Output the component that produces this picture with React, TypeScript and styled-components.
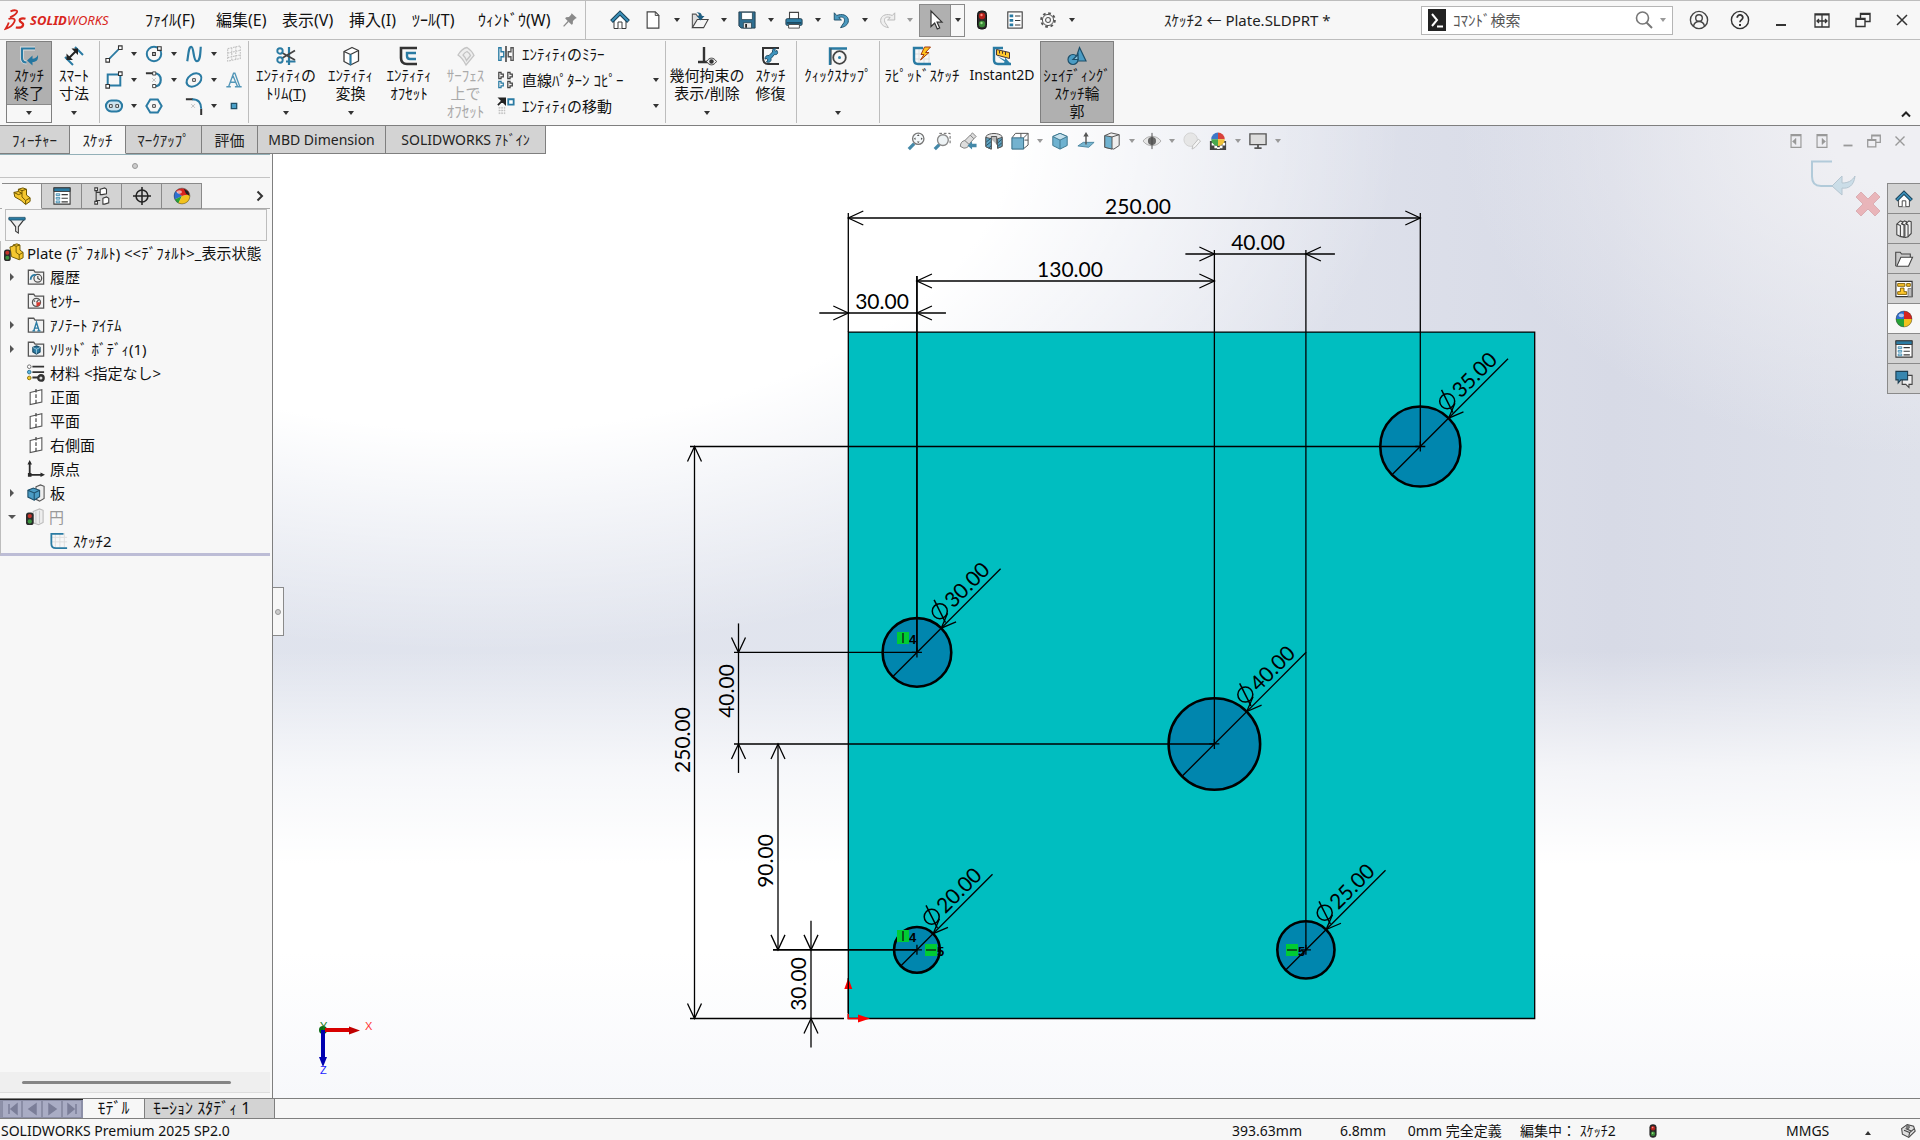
import React from "react";
import styled, { createGlobalStyle } from "styled-components";

const BLUE = "#2a7ba3";
const DARK = "#3a3a3a";

const GlobalStyle = createGlobalStyle`
  html, body, #root { height: 100%; margin: 0; }
  * { box-sizing: border-box; }
  body {
    font-family: "Noto Sans", "Noto Sans CJK JP", sans-serif;
    font-size: 15px;
    line-height: 18px;
    color: #111;
    background: #f7f7f7;
    overflow: hidden;
  }
  button, input {
    font: inherit; color: inherit; border: 0; padding: 0; margin: 0; background: none;
  }
  button { white-space: nowrap; }
  ul { list-style: none; margin: 0; padding: 0; }
`;

/* ---------- icon drawings, all on a 20 x 20 grid ---------- */

const ART: Record<string, React.ReactNode> = {
  pin: (
    <g>
      <path d="M12 1.500l6.500 6-2 .8-2.800 3-.2 3.700-1.500 1L4 8l1-1.500 3.700-.3 2.600-2.700z" fill="#8a8a8a" />
      <path d="M8 11.500L2 18" stroke="#8a8a8a" strokeWidth="1.600" />
    </g>
  ),
  home: (
    <g>
      <path d="M4 10v8.500h12V10l-6-6z" fill="#fff" stroke={DARK} />
      <path d="M8 18.500v-6.500h4v6.500" fill="#fff" stroke={DARK} />
      <path d="M1.500 11.500L10 3l8.500 8.500" fill="none" stroke="#183f55" strokeWidth="4" />
      <path d="M2 11L10 3l8 8" fill="none" stroke="#3b8fb8" strokeWidth="2" />
    </g>
  ),
  file: (
    <g>
      <path d="M3.500 1h9l4 4v14h-13z" fill="#fff" stroke="#444" strokeWidth="1.300" />
      <path d="M12.500 1v4h4z" fill="#ddd" stroke="#444" />
    </g>
  ),
  open: (
    <g>
      <path d="M1.500 18V3.500h4l1.500 2h5V8" fill="#ddd" stroke="#555" strokeWidth="1.200" />
      <path d="M1.500 18.500L7 9.500h12l-5 9z" fill="#f5f5f5" stroke="#444" strokeWidth="1.200" />
      <path d="M6 1.500c4 0 6 1 6 4h3l-4.500 5L6.500 5.500H9c0-2-1-3-3-4z" fill="#1f5f83" />
    </g>
  ),
  save: (
    <g>
      <path d="M1 1h18v18H3.500L1 16.500z" fill="#2f6f91" stroke="#1f3a49" />
      <path d="M4 1.500h12v8H4z" fill="#fff" stroke="#1f3a49" strokeWidth=".8" />
      <path d="M6 13h9v6H6z" fill="#e8e8e8" stroke="#1f3a49" strokeWidth=".8" />
      <path d="M8 14.500h2v4H8z" fill="#222" />
    </g>
  ),
  print: (
    <g>
      <path d="M5 9V1.500h10V9" fill="#fff" stroke="#444" strokeWidth="1.200" />
      <rect x="1" y="8.500" width="18" height="7.500" rx="1.500" fill="#2f7fa6" stroke="#1f3a49" />
      <path d="M2 12.500h16v1.500H2z" fill="#17394b" />
      <path d="M4 15h12v4H4z" fill="#fff" stroke="#444" />
    </g>
  ),
  undo: <path d="M2.500 2v8h8L7.500 7.300c4.500-1.500 7.500.2 6 5.200L9.500 18.500c6.500-1 9.500-5 8.500-9.500C16.800 4.300 11 2.700 5.200 5z" fill="#4b9ac0" stroke="#20526c" strokeWidth="1.100" />,
  redo: <path d="M17.500 2v8h-8l3-2.700c-4.500-1.500-7.500.2-6 5.200l4 6C4 17.500 1 13.500 2 9 3.200 4.300 9 2.700 14.800 5z" fill="#eee" stroke="#bbb" strokeWidth="1.100" />,
  cursor: <path d="M6 1v15.500l3.700-3.500 2.600 6 2.400-1-2.600-5.800H17z" fill="#fff" stroke="#333" strokeWidth="1.200" />,
  traffic: (
    <g>
      <rect x="5.500" y="1" width="9" height="18" rx="3.500" fill="#2b2b2b" stroke="#111" />
      <circle cx="10" cy="6" r="3.200" fill="#b3211b" />
      <circle cx="10" cy="14" r="3.200" fill="#3a8a37" />
      <circle cx="9.500" cy="5" r="1.200" fill="#ff8b80" />
      <circle cx="9.500" cy="13" r="1.200" fill="#9be08a" />
    </g>
  ),
  options: (
    <g>
      <rect x="2" y="1" width="16" height="18" fill="#fff" stroke={DARK} strokeWidth="1.200" />
      <path d="M4 4h4v3H4zM4 9h4v3H4zM4 14h4v3H4z" fill={BLUE} />
      <path d="M10 5.500h6M10 10.500h6M10 15.500h6" stroke={DARK} strokeWidth="1.200" />
    </g>
  ),
  gear: (
    <g fill="none" stroke="#555">
      <circle cx="10" cy="10" r="7.600" strokeWidth="2.200" strokeDasharray="3 2.970" />
      <circle cx="10" cy="10" r="6.200" fill="#f7f7f7" strokeWidth="1.100" />
      <circle cx="10" cy="10" r="2.700" strokeWidth="1.200" />
    </g>
  ),
  user: (
    <g fill="none" stroke="#444" strokeWidth="1.400">
      <circle cx="10" cy="10" r="8.600" />
      <circle cx="10" cy="8" r="3.300" />
      <path d="M4.500 16c1-4 3-4.500 5.500-4.500s4.500.5 5.500 4.500" />
    </g>
  ),
  help: (
    <g fill="none" stroke="#333" strokeWidth="1.400">
      <circle cx="10" cy="10" r="8.600" />
      <path d="M7.200 7.800c0-4 5.800-3.600 5.600 0-.1 2-2.800 2.200-2.800 4.400" strokeWidth="1.800" />
      <path d="M10 14v2" strokeWidth="2" />
    </g>
  ),
  minimize: <path d="M5 15h10" stroke="currentColor" strokeWidth="2" />,
  span: (
    <g fill="none" stroke="currentColor" strokeWidth="1.300">
      <path d="M3 4h14v13H3zM3 4.800h14M10 4v13M5 11h10M7 9l-2 2 2 2M13 9l2 2-2 2" />
    </g>
  ),
  restore: (
    <path d="M3 8.500h9v8H3zM3 9.200h9M7.500 8V3.500H17v8h-5M7.500 4.200H17" fill="none" stroke="currentColor" strokeWidth="1.400" />
  ),
  close: <path d="M5 5l10 10M15 5L5 15" stroke="currentColor" strokeWidth="1.500" />,
  paneLeft: (
    <g fill="none" stroke="currentColor" strokeWidth="1.300">
      <path d="M4.500 3h11v14h-11zM4.500 4h11" />
      <path d="M10 7l-4 3.500 4 3.500z" fill="currentColor" strokeWidth=".5" />
    </g>
  ),
  paneRight: (
    <g fill="none" stroke="currentColor" strokeWidth="1.300">
      <path d="M4.500 3h11v14h-11zM4.500 4h11" />
      <path d="M10 7l4 3.500-4 3.500z" fill="currentColor" strokeWidth=".5" />
    </g>
  ),
  exitSketch: (
    <g>
      <path d="M16 2.500H3v9.500c0 3 2 4.500 4.500 4.500" fill="none" stroke="#fff" strokeWidth="4" opacity=".6" />
      <path d="M16 2.500H3v9.500c0 3 2 4.500 4.500 4.500" fill="none" stroke={BLUE} strokeWidth="2.200" />
      <path d="M19 9c.5 5-1.500 7-5.500 7v3.500L8 14.500l5.500-5v3.200c2.500 0 4-1 5.500-3.700z" fill="#2476a0" />
    </g>
  ),
  smartDim: (
    <g fill="none">
      <path d="M1 11l8 8M11 1l8 8" stroke={BLUE} strokeWidth="2" />
      <path d="M4 13L13 4" stroke="#222" strokeWidth="2" />
      <path d="M2.500 14V7.500L9 14zM14 2.500H7.500L14 9z" fill="#222" />
    </g>
  ),
  line: (
    <g>
      <path d="M3 17L17 3" stroke={BLUE} strokeWidth="2" />
      <path d="M1 15h4v4H1zM15 1h4v4h-4z" fill="#fff" stroke="#333" strokeWidth="1.200" />
    </g>
  ),
  circle: (
    <g fill="none" stroke={BLUE}>
      <circle cx="10" cy="10" r="8" strokeWidth="2.200" />
      <path d="M8.500 8.500h3v3h-3zM14 2h4v4h-4z" fill="#fff" stroke="#333" strokeWidth="1.200" />
    </g>
  ),
  spline: <path d="M2.500 18C4 9 4 2 7 2s2 16 6 16 4-8 4.500-16" fill="none" stroke={BLUE} strokeWidth="2.400" />,
  gridPlane: <path d="M3 4l14-3v14L3 18zM3 9l14-3M3 14l14-3M7.500 3v14M12 2v14" fill="none" stroke="#c0c0c0" strokeWidth="1.200" strokeDasharray="2 1" />,
  rect: (
    <g fill="none">
      <path d="M3 4h14v12H3z" stroke={BLUE} strokeWidth="2.200" />
      <path d="M1 15h4v4H1zM15 1h4v4h-4z" fill="#fff" stroke="#333" strokeWidth="1.200" />
    </g>
  ),
  arc: (
    <g fill="none">
      <path d="M1 2.500h8" stroke="#333" strokeWidth="2.200" />
      <path d="M10 2.500c5 0 7.500 3 7.500 7.500s-2.500 7-7.500 7" stroke={BLUE} strokeWidth="2.400" />
      <path d="M8.500 1h3.500v3.500H8.500zM8.500 15h3.500v3.500H8.500z" fill="#fff" stroke="#333" />
      <path d="M8 8l4 4M12 8l-4 4" stroke="#bbb" />
    </g>
  ),
  ellipse: (
    <g fill="none">
      <ellipse cx="10" cy="10" rx="9" ry="6.500" transform="rotate(-35 10 10)" stroke={BLUE} strokeWidth="2.200" />
      <path d="M8.500 8.500h3v3h-3z" fill="#fff" stroke="#333" />
    </g>
  ),
  letterA: (
    <path d="M1.500 17.500h5M11 17.500h7.500M4 17.500L9.500 2.500h1.500l5.500 15M14 17.500L9 5.500M6 12.500h6.500" fill="none" stroke="#5497b8" strokeWidth="1.500" />
  ),
  slot: (
    <g fill="none">
      <rect x="1" y="4" width="18" height="12" rx="6" fill="#cde3ee" stroke={BLUE} strokeWidth="2.200" />
      <path d="M5 8.500h3v3H5zM12 8.500h3v3h-3z" fill="#fff" stroke="#333" />
    </g>
  ),
  polygon: (
    <g fill="none">
      <path d="M5.800 2.800h8.400L18.500 10l-4.300 7.200H5.800L1.500 10z" stroke={BLUE} strokeWidth="2.200" />
      <path d="M8.500 8.500h3v3h-3z" fill="#fff" stroke="#333" />
    </g>
  ),
  fillet: (
    <g fill="none" strokeWidth="2.200">
      <path d="M1 2.500h8M18 13v7" stroke="#333" />
      <path d="M8 2.500c7 0 10 4 10 10.500" stroke={BLUE} />
      <path d="M7 8l4 4M11 8l-4 4" stroke="#bbb" strokeWidth="1" />
    </g>
  ),
  point: <path d="M7 7h6v6H7z" fill="#4aa0c8" stroke="#1f4f68" strokeWidth="1.400" />,
  trim: (
    <g fill="none">
      <path d="M13 1v18M10 15.500h9.500" stroke={BLUE} strokeWidth="2.200" />
      <path d="M5.500 6.500L19 14M5.500 12.500L19 4.500" stroke="#444" strokeWidth="1.800" />
      <circle cx="4" cy="5" r="2.700" stroke={BLUE} strokeWidth="1.900" />
      <circle cx="4" cy="14" r="2.700" stroke={BLUE} strokeWidth="1.900" />
    </g>
  ),
  convert: (
    <g stroke={DARK} strokeWidth="1.300" strokeLinejoin="round">
      <path d="M3 5.500l8-4 6.500 3v10.500l-8 4L3 15.500z" fill="#fff" />
      <path d="M3 5.500l6.500 3 8-4M9.500 8.500V19" fill="none" />
      <path d="M9.500 8.500V19" stroke={BLUE} strokeWidth="2" />
    </g>
  ),
  offset: (
    <g fill="none">
      <path d="M18 2H2v10c0 4 2 6 6 6h10" stroke="#333" strokeWidth="2.600" />
      <path d="M17 7H8v3c0 2 1 3 3 3h6" stroke={BLUE} strokeWidth="2.400" />
    </g>
  ),
  surfaceOffset: (
    <g fill="#eee" stroke="#c4c4c4" strokeWidth="1.300">
      <path d="M2 9C5 4 8 2 11 1.500c3 2 5.500 4.500 7 8L10 19C8 15 5 11 2 9z" />
      <path d="M7 9c1.500-2.500 2.500-3 4-3.500 1.500 1 3 2.500 3.500 4l-4 5C10 12.500 8.500 10.500 7 9z" />
    </g>
  ),
  mirror: (
    <g fill="none" strokeWidth="1.500">
      <path d="M10 1v18" stroke="#222" />
      <path d="M2 3v14h2.500v-4H7.500V7.500h-3V3z" stroke={BLUE} />
      <path d="M18 3v14h-2.500v-4H12.500V7.500h3V3z" stroke="#555" />
    </g>
  ),
  pattern: (
    <g fill="none" strokeWidth="1.400">
      <path d="M2 1.500v7h2.500v-2H7V3.500H4.500v-2zM12 1.500v7h2.500v-2H17V3.500h-2.500v-2zM12 11.500v7h2.500v-2H17v-3h-2.500v-2z" stroke="#444" />
      <path d="M2 11.500v7h2.500v-2H7v-3H4.500v-2z" stroke={BLUE} />
    </g>
  ),
  move: (
    <g>
      <path d="M2 12h7M2 15h7M2 18h7M2.500 11v8M5.500 11v8M8.500 11v8" stroke="#c0c0c0" strokeDasharray="2 1" />
      <path d="M1 9l5-5M3 1.500h6v6z" stroke="#222" strokeWidth="2" fill="#222" />
      <path d="M12.500 2.500h6v6h-6z" fill="#fff" stroke={BLUE} strokeWidth="2" />
    </g>
  ),
  relations: (
    <g fill="none">
      <path d="M7 1v14.500M1 16h11" stroke="#333" strokeWidth="2.400" />
      <path d="M9.500 15.500c3-4.500 7-4.500 10 0-3 4.500-7 4.500-10 0z" fill="#eee" stroke="#444" />
      <circle cx="14.500" cy="15.500" r="2.200" fill="#333" />
    </g>
  ),
  repair: (
    <g fill="none">
      <path d="M18 2H2v10c0 4 2 6 5 6h11" stroke="#333" strokeWidth="2" />
      <path d="M16 4.500c1.500 3 0 4.500-2.500 4L10 12.500c.5 3-1.500 4.500-4.500 3.500l1.500-2-1-1.500-2 .5c0-2.500 1.500-4 4-3.500L11.500 6c-.5-2.500 1-4 3.500-3.500L13.500 4l1 1.200z" fill="#3d93bd" stroke="#1d4e69" />
    </g>
  ),
  quickSnap: (
    <g fill="none">
      <path d="M2 19V2.500h17" stroke={BLUE} strokeWidth="2.400" />
      <path d="M3 18.500V2.500" stroke="#444" strokeWidth="1" />
      <circle cx="11.500" cy="11.500" r="6.300" stroke="#444" strokeWidth="1.800" />
      <circle cx="11.500" cy="11.500" r="1.500" fill={BLUE} />
    </g>
  ),
  rapid: (
    <g fill="none">
      <path d="M7 2v16M12 8v10M2 8h15M2 13h16M17 6v12" stroke="#ddd" />
      <path d="M11 2H2v12c0 3 1.500 4 4 4h13" stroke={BLUE} strokeWidth="2.400" />
      <path d="M12.500 1L9 8.500h3L8.500 14 17 6.500h-3.500L18.500 1z" fill="#ffc21c" stroke="#a33a12" />
    </g>
  ),
  instant: (
    <g fill="none">
      <path d="M11 2H2v12c0 3 1.500 4 4 4h13" stroke={BLUE} strokeWidth="2.400" />
      <path d="M4.500 3.500l13 3v6l-13-3.500z" fill="#ffc82c" stroke="#433" />
      <path d="M7.500 4.500v3M10.500 5.200v2.500M13.500 6v3" stroke="#433" />
      <path d="M5 10l8 4v-2.500L18 17l-6 .5.500-2z" fill="#2f82ab" />
    </g>
  ),
  shaded: (
    <g stroke="#1d4e69" strokeWidth="1.200">
      <path d="M12.500 1.500L19 15H8z" fill="#4b9cc4" />
      <circle cx="6" cy="13.500" r="5" fill="#4b9cc4" />
      <path d="M6 13.500l5-5v5z" fill="#8cc4de" />
    </g>
  ),
  zoomFit: (
    <g fill="none">
      <path d="M2 19l6-6" stroke="#4488a8" strokeWidth="3.600" />
      <circle cx="12.500" cy="7.500" r="6.300" fill="#f4f8fa" stroke="#777" strokeWidth="1.500" />
      <path d="M12.500 2.500l1.500 2h-3zM12.500 12.500l1.500-2h-3zM7.500 7.500l2-1.500v3zM17.500 7.500l-2-1.500v3z" fill="#555" />
    </g>
  ),
  zoomArea: (
    <g fill="none">
      <path d="M7 1.500h12v12" stroke="#555" strokeDasharray="3 2" />
      <path d="M2 19l5-5" stroke="#4488a8" strokeWidth="3.600" />
      <circle cx="11" cy="9" r="6" fill="#eef3f5" stroke="#888" strokeWidth="1.500" />
    </g>
  ),
  prevView: (
    <g>
      <path d="M1.500 16c0-4 2-6 5-6.500L13 3l2-2 4 4-2 2-5 5.500c0 3-3 5.500-6.500 5.500z" fill="#ddd" stroke="#777" />
      <path d="M6.500 9.500l5 4.500M12.500 3.500l4 4" stroke="#777" />
      <path d="M19.500 13h-5v-2.500l-5 4.500 5 4.500V17h5z" fill="#4488a8" />
    </g>
  ),
  section: (
    <g stroke="#555" strokeWidth="1.100">
      <path d="M1 5c3-4.500 15-4.500 18 0v11l-5 2V8H7v11l-6-3z" fill="#e5e5e5" />
      <path d="M7 8V5h6v9" fill="#bbb" />
      <path d="M1 6l6 1.500V19l-6-2.500zM14 7.500L19 6v10l-5 2z" fill="#5ea3c2" />
      <path d="M1.500 11l5-4M1.500 15l5-4M4 18l3-3M14.500 12l4-4M14.500 16l4-4" stroke="#244f63" />
    </g>
  ),
  viewOrient: (
    <g stroke="#555" strokeWidth="1.100">
      <path d="M5 1.500h14v13l-5 4M5 1.500l-4 5M19 1.500l-5 5M11 1.500v5M15 9h4" fill="none" />
      <path d="M1 6.500h13V19H1z" fill="#74b2cf" stroke="#356a84" />
    </g>
  ),
  cube: (
    <g stroke="#3f7890" strokeWidth="1.100" strokeLinejoin="round">
      <path d="M10 1.500l8 3.500v10l-8 4-8-4V5z" fill="#6fb2d0" />
      <path d="M2 5l8 4 8-4-8-3.500z" fill="#c6e1ed" />
      <path d="M10 9v10" />
    </g>
  ),
  normalTo: (
    <g>
      <path d="M1 15.500l6-4h12l-6 5.500z" fill="#77b5d0" stroke="#47839e" />
      <path d="M10 14V4" stroke="#555" strokeWidth="1.600" />
      <path d="M10 0l3 5H7z" fill="#555" />
    </g>
  ),
  display: (
    <g stroke="#555" strokeWidth="1.100">
      <path d="M2 4l7-3 9 2v12l-6 4-10-2z" fill="#eee" />
      <path d="M2 4l8 1.500V19L2 17z" fill="#6fb2d0" />
      <path d="M10 5.500l8-2.500" fill="none" />
    </g>
  ),
  eye: (
    <g>
      <path d="M0 10c5-7 15-7 20 0-5 7-15 7-20 0z" fill="#e6e6e6" stroke="#aaa" />
      <circle cx="10" cy="10" r="4.500" fill="#666" />
      <path d="M10 1v18" stroke="#444" />
    </g>
  ),
  editApp: (
    <g>
      <circle cx="8.500" cy="8.500" r="7.500" fill="#e6e6e6" stroke="#d0d0d0" />
      <path d="M10 19l1-4 6-7 2.500 2-6 7z" fill="#f6f6f6" stroke="#bbb" />
    </g>
  ),
  scene: (
    <g>
      <path d="M1 10h18v10H1z" fill="#444" />
      <path d="M3 12h3v3H3zM6 15h3v3H6zM12 15h3v3h-3zM15 12h3v3h-3zM9 17h3v2H9z" fill="#fff" />
      <path d="M10 8V.5A7.500 7.500 0 0 0 2.500 8z" fill="#3f78c8" />
      <path d="M10 8V.5A7.500 7.500 0 0 1 17.500 8z" fill="#d8423b" />
      <path d="M10 8v7.500A7.500 7.500 0 0 1 2.500 8z" fill="#48a84d" />
      <path d="M10 8v7.500A7.500 7.500 0 0 0 17.500 8z" fill="#f1c33b" />
    </g>
  ),
  monitor: (
    <g>
      <path d="M1 2h18v12H1z" fill="#ddd" stroke="#555" strokeWidth="1.500" />
      <path d="M10 14v3M6 18h8" stroke="#555" strokeWidth="2" />
    </g>
  ),
  part: (
    <g stroke="#6d5600" strokeWidth="1.100" strokeLinejoin="round">
      <path d="M1 6l5-1V2.500L11 1l4 1.500V9l4 3v4l-5 3.500-5-4.500-7-4z" fill="#f5c72f" />
      <path d="M6 5l4 2v4l4 4 5-3M10 3.500V7M6 2.500l4 1.500 5-1.500M1 6l5 2.500L10 7M14 15v4" fill="none" />
    </g>
  ),
  properties: (
    <g>
      <path d="M1 1h18v18H1z" fill="#fff" stroke={DARK} strokeWidth="1.200" />
      <path d="M1 1h18v4H1z" fill={BLUE} stroke={DARK} />
      <path d="M3.500 7.500h4v2h-4zM3.500 11.500h4v2h-4zM3.500 15.500h4v2h-4z" fill="#bfe0ee" stroke={BLUE} strokeWidth=".8" />
      <path d="M9.500 8.500h7M9.500 12.500h7M9.500 16.500h7" stroke={DARK} strokeWidth="1.200" />
    </g>
  ),
  config: (
    <g fill="#fff" stroke={DARK} strokeWidth="1.200">
      <path d="M3.500 1v18M3.500 6H8M3.500 15H8" fill="none" />
      <path d="M8 2.500l5-1.500 2 1.500v5l-5 1H8zM11 12.500l4-1.500 2.500 1.500v5l-4.500 1.500H11z" />
      <path d="M2 1h3v3H2zM2 16h3v3H2z" />
    </g>
  ),
  target: (
    <g fill="none" stroke="#222" strokeWidth="1.700">
      <circle cx="10" cy="10" r="6.600" />
      <path d="M10 0v20M0 10h20" />
    </g>
  ),
  ball: (
    <g>
      <path d="M10 10V1a9 9 0 0 0-9 9z" fill="#2f6fd0" />
      <path d="M10 10V1a9 9 0 0 1 9 9z" fill="#d8241e" />
      <path d="M10 10v9a9 9 0 0 1-9-9z" fill="#27a336" />
      <path d="M10 10v9a9 9 0 0 0 9-9z" fill="#f2c21d" />
      <circle cx="10" cy="10" r="8.800" fill="none" stroke="#333" strokeOpacity=".5" />
      <ellipse cx="7" cy="6" rx="3" ry="2" fill="#fff" opacity=".6" />
    </g>
  ),
  appearance: (
    <g>
      <path d="M10 10L3 4.500A9 9 0 0 0 2 14z" fill="#2f6fd0" />
      <path d="M10 10L3 4.500A9 9 0 0 1 18.500 8z" fill="#d8241e" />
      <path d="M10 10l-8 4a9 9 0 0 0 4 4z" fill="#27a336" />
      <path d="M10 10l-4 8a9 9 0 0 0 13-8l-.5-2z" fill="#f2c21d" />
      <path d="M12 2l5 3 1.500 5-4-2.500z" fill="#222" />
      <circle cx="10" cy="10" r="8.800" fill="none" stroke="#333" strokeOpacity=".5" />
      <ellipse cx="7" cy="5.500" rx="3" ry="2" fill="#fff" opacity=".6" />
    </g>
  ),
  funnel: (
    <g>
      <path d="M1.500 3h17l-7 9v7l-3-2v-5z" fill="#eee" stroke={DARK} strokeWidth="1.200" />
      <path d="M1 1.500h18v3H1z" fill={BLUE} stroke="#1f4f68" strokeWidth=".8" />
    </g>
  ),
  partState: (
    <g>
      <g transform="translate(4 -1) scale(.86)" stroke="#6d5600" strokeWidth="1.200" strokeLinejoin="round">
        <path d="M3 5l4-1V2.500L12 1l4 1.500V9l4 3v7l-5 2.500-10-4z" fill="#f5c72f" />
        <path d="M7 2.500l4 1.500 5-1.500M11 4v8l4 3 5-3M15 15v6" fill="none" />
      </g>
      <rect x="0" y="6" width="7.500" height="13" rx="3" fill="#2b2b2b" />
      <circle cx="3.700" cy="9.700" r="2.200" fill="#c5332b" />
      <circle cx="3.700" cy="15.300" r="2.200" fill="#3c9440" />
    </g>
  ),
  folderHistory: (
    <g fill="none" stroke="#555" strokeWidth="1.400">
      <path d="M1.500 18V2.500h6l1.500 2h9.500V18z" fill="#f2f2f2" />
      <circle cx="12" cy="11.500" r="4.300" />
      <path d="M12 9v2.500l2.500 1.500" />
      <path d="M4 13c0-4 3-6 6-5" stroke={BLUE} strokeWidth="2" />
    </g>
  ),
  folderSensor: (
    <g fill="none" stroke="#555" strokeWidth="1.400">
      <path d="M1.500 18V2.500h6l1.500 2h9.500V18z" fill="#f2f2f2" />
      <circle cx="10.500" cy="11.500" r="4.500" />
      <path d="M10.500 11.500l2.500-3M7.500 9.500l1.500 1" />
      <path d="M10.500 11.500h4.500a4.500 4.500 0 0 1-4.500 4.500z" fill="#d8392f" stroke="none" />
    </g>
  ),
  folderA: (
    <g fill="none" stroke="#555" strokeWidth="1.400">
      <path d="M1.500 18V2.500h6l1.500 2h9.500V18z" fill="#f2f2f2" />
      <path d="M6 16.500h3M11.500 16.500h3.500M7.500 16.500l3-9.500 3 9.500M8.500 13.500h4" stroke={BLUE} strokeWidth="1.600" />
    </g>
  ),
  folderBody: (
    <g fill="none" stroke="#555" strokeWidth="1.400">
      <path d="M1.500 18V2.500h6l1.500 2h9.500V18z" fill="#f2f2f2" />
      <path d="M10.500 6.500l4 1.800v5l-4 2.200-4-2.200v-5z" fill={BLUE} stroke="#1d4e69" />
      <path d="M6.500 8.300l4 2 4-2M10.500 10.300v5" stroke="#bfe0ee" strokeWidth=".8" />
    </g>
  ),
  material: (
    <g>
      <path d="M6 3h13M6 9h13M6 15h8" stroke="#333" strokeWidth="2" />
      <circle cx="2.500" cy="3" r="2" fill="#fff" stroke="#666" />
      <circle cx="2.500" cy="9" r="2" fill="#5db6df" stroke="#2a6f90" />
      <circle cx="2.500" cy="15.500" r="2" fill="#f1c92f" stroke="#8b6f00" />
      <circle cx="15.500" cy="15.500" r="3" fill="#ddd" stroke="#333" strokeWidth="2.600" />
    </g>
  ),
  plane: (
    <g fill="#fff" stroke="#555" strokeWidth="1.200">
      <path d="M3.500 5l13-3v13.500l-13 3z" />
      <path d="M10 1v18" stroke="#333" strokeDasharray="4 2" />
    </g>
  ),
  origin: (
    <g>
      <path d="M3 3v13.500h14" fill="none" stroke="#2a2a2a" strokeWidth="2" />
      <path d="M3 0l2.500 5H.5zM20 16.500L15 14v5zM1 14.500h4v4H1z" fill="#2a2a2a" />
    </g>
  ),
  extrude: (
    <g strokeWidth="1.200">
      <path d="M10 3l5-2 4 1.500V16l-5 3-4-2z" fill="#eee" stroke="#555" />
      <path d="M1 7l6-2.500L14 7v7l-6 4-7-3.500z" fill="#4b9cc4" stroke="#1d4e69" />
      <path d="M1 7l7 3 6-3M8 10v8" fill="none" stroke="#1d4e69" />
    </g>
  ),
  extrudeBusy: (
    <g strokeWidth="1.200">
      <path d="M8 4l7-3 4 1.500V16l-5 2.500-6-2z" fill="#eee" stroke="#bbb" />
      <path d="M11 4v13M15 3v14" stroke="#ccc" />
      <rect x="0" y="5" width="8.500" height="14" rx="3" fill="#2b2b2b" />
      <circle cx="4.200" cy="9" r="2.400" fill="#c5332b" />
      <circle cx="4.200" cy="15" r="2.400" fill="#3c9440" />
    </g>
  ),
  sketch: (
    <g fill="none">
      <path d="M6 1v16M11 1v16M16 1v16M2 6h17M2 11h17" stroke="#dcdcdc" />
      <path d="M15 2H1.500v11c0 3 2 5 5 5H19" stroke={BLUE} strokeWidth="2" />
    </g>
  ),
  library: (
    <g fill="#f2f2f2" stroke="#444" strokeWidth="1.200" strokeLinejoin="round">
      <path d="M12 4l3.500-3L18 2v13l-3.500 3.500-3-1z" />
      <path d="M7 4l3.500-3L13 2l-1 2.500 2.500 1v13l-3 1-3.500-1.500z" />
      <path d="M2 4.500L6 1l2.500 1-1 2.500 2.500 1V19l-3.500-.5L2 16.500z" />
      <path d="M2 4.500l4 1.500v12M7 4l4 1.500v13M12 4l2.500 1" fill="none" />
    </g>
  ),
  folderOpen: (
    <g stroke="#444" strokeWidth="1.200">
      <path d="M.8 18V2.500h5l1.500 2H17V8" fill="#c9c9c9" />
      <path d="M2 18L6.500 8h13L15 18z" fill="#fff" />
    </g>
  ),
  palette: (
    <g>
      <path d="M1 1.500h18v17H1z" fill="#fff" stroke="#333" strokeWidth="1.300" />
      <path d="M3 4h8v3H3zM13 4h4v3h-4zM3 13h3V9h4v4h3v3H3z" fill="#ffc82c" stroke="#7a5a00" />
      <path d="M14.500 9.500h4v9h-4z" fill="#bbb" stroke="#777" />
    </g>
  ),
  forum: (
    <g strokeWidth="1.200">
      <path d="M8 6h11v10h-3.500v3.500L12 16H8z" fill="#eee" stroke="#444" />
      <path d="M1 1.500h13V11H6.500l-3 3.500V11H1z" fill="#3786af" stroke="#1d3f52" />
    </g>
  ),
  tag: (
    <g fill="#ddd" stroke="#444" strokeWidth="1.300">
      <path d="M2 7l7-5 8 2 2 6-8 8-8-4z" />
      <path d="M5 9l7 3M7 7l7 3M11 17l1-5 6-5" />
      <circle cx="10" cy="5" r="1.500" />
    </g>
  ),
};

const Svg = styled.svg<{ $s?: number }>`
  display: block;
  flex: none;
  width: ${(p) => p.$s ?? 20}px;
  height: ${(p) => p.$s ?? 20}px;
  overflow: visible;
`;
const Icon = ({ name, size }: { name: string; size?: number }) => (
  <Svg viewBox="0 0 20 20" $s={size} aria-hidden="true">
    {ART[name]}
  </Svg>
);

const Caret = styled.span<{ $faint?: boolean }>`
  width: 0;
  height: 0;
  border: 3px solid transparent;
  border-top: 4px solid ${(p) => (p.$faint ? "#999" : "#333")};
  border-bottom: 0;
`;

/* ---------- title bar ---------- */

const Page = styled.div`
  height: 100vh;
  display: flex;
  flex-direction: column;
  border-top: 1px solid #bdbdbd;
`;
const TitleBar = styled.header`
  height: 39px;
  flex: none;
  display: flex;
  align-items: center;
  border-bottom: 1px solid #bdbdbd;
  background: #f7f7f7;
`;
const Brand = styled.div`
  width: 138px;
  padding-left: 4px;
  display: flex;
  align-items: center;
  gap: 3px;
  color: #d9261c;
  font-size: 13px;
  font-style: italic;
  b { font-weight: 700; }
`;
const Menu = styled.nav`
  display: flex;
  width: 424px;
  font-size: 16px;
`;
const MenuItem = styled.button<{ $w: number }>`
  width: ${(p) => p.$w}px;
  padding-left: 7px;
  text-align: left;
`;
const PinCell = styled.button`
  width: 24px;
  height: 38px;
  border-right: 1px solid #bdbdbd;
  display: flex;
  align-items: center;
`;
const QuickBar = styled.div`
  display: flex;
  align-items: center;
  padding-left: 22px;
`;
const IconButton = styled.button<{ $mr?: number }>`
  width: 24px;
  height: 30px;
  display: flex;
  align-items: center;
  justify-content: center;
  margin-right: ${(p) => p.$mr ?? 0}px;
`;
const CaretButton = styled.button<{ $w?: number }>`
  width: ${(p) => p.$w ?? 23}px;
  height: 30px;
  display: flex;
  align-items: center;
  justify-content: center;
`;
const SelectTool = styled.div`
  display: flex;
  width: 46px;
  height: 33px;
  margin-right: 5px;
  border: 1px solid #8a8a8a;
  button:first-child { width: 32px; height: 31px; background: #b0b0b0; border-right: 1px solid #8a8a8a; margin: 0; }
`;
const DocTitle = styled.div`
  flex: 1;
  padding-left: 81px;
  color: #222;
`;
const SearchBox = styled.label`
  width: 252px;
  height: 29px;
  margin-right: 5px;
  padding: 0 6px;
  display: flex;
  align-items: center;
  gap: 7px;
  border: 1px solid #b5b5b5;
  background: #fff;
  input { flex: 1; min-width: 0; outline: 0; }
  input::placeholder { color: #555; opacity: 1; }
`;
const WindowButton = styled.button<{ $w: number }>`
  width: ${(p) => p.$w}px;
  height: 30px;
  display: flex;
  align-items: center;
  justify-content: center;
  color: inherit;
`;
const WindowButtons = styled.div<{ $faint?: boolean }>`
  display: flex;
  align-items: center;
  color: ${(p) => (p.$faint ? "#999" : "#333")};
`;

const QUICK: [string, string, number?][] = [
  ["file", "新規"],
  ["open", "開く"],
  ["save", "保存"],
  ["print", "印刷"],
  ["undo", "元に戻す"],
  ["redo", "やり直し", 19],
];

const Title = () => (
  <TitleBar>
    <Brand>
      <svg width="23" height="22" viewBox="0 0 23 22" fill="none" stroke="#d9261c" aria-hidden="true">
        <path d="M6.500 2.300C10 .8 14 .8 13 3.200 12.200 5 9.500 7 6 8.300" strokeWidth="1.800" />
        <path d="M4.500 9.800C9 8.500 12 9.800 10.200 13.200 8.500 16.500 5 19 1.500 20c1.500-2.500 2.700-4.600 3.300-6.500" strokeWidth="1.800" />
        <path d="M21.500 9.800c-3-.8-6-.2-5.800 1.700.3 2.300 4.300 2 3.300 4.800-.8 2.200-4 2.700-7.200 2.200" strokeWidth="2.200" />
      </svg>
      <span><b>SOLID</b>WORKS</span>
    </Brand>
    <Menu>
      <MenuItem $w={71}>ﾌｧｲﾙ(F)</MenuItem>
      <MenuItem $w={66}>編集(E)</MenuItem>
      <MenuItem $w={67}>表示(V)</MenuItem>
      <MenuItem $w={63}>挿入(I)</MenuItem>
      <MenuItem $w={66}>ﾂｰﾙ(T)</MenuItem>
      <MenuItem $w={84}>ｳｨﾝﾄﾞｳ(W)</MenuItem>
    </Menu>
    <PinCell aria-label="固定"><Icon name="pin" size={16} /></PinCell>
    <QuickBar>
      <IconButton $mr={9} aria-label="ホーム"><Icon name="home" /></IconButton>
      {QUICK.map(([n, label, w]) => (
        <React.Fragment key={n}>
          <IconButton aria-label={label}><Icon name={n} size={18} /></IconButton>
          <CaretButton $w={w} aria-label={label}><Caret $faint={n === "redo"} /></CaretButton>
        </React.Fragment>
      ))}
      <SelectTool>
        <IconButton aria-label="選択"><Icon name="cursor" /></IconButton>
        <CaretButton $w={13} aria-label="選択"><Caret /></CaretButton>
      </SelectTool>
      <IconButton $mr={9} aria-label="再構築"><Icon name="traffic" /></IconButton>
      <IconButton $mr={9} aria-label="プロパティ"><Icon name="options" size={18} /></IconButton>
      <IconButton aria-label="オプション"><Icon name="gear" size={18} /></IconButton>
      <CaretButton aria-label="オプション"><Caret /></CaretButton>
    </QuickBar>
    <DocTitle>ｽｹｯﾁ2 ← Plate.SLDPRT *</DocTitle>
    <SearchBox>
      <svg width="18" height="22" viewBox="0 0 18 22" aria-hidden="true">
        <path d="M0 0h18v22H0z" fill="#222" />
        <path d="M4 5l5 6-5 6M9 17.500h6" fill="none" stroke="#fff" strokeWidth="2" />
      </svg>
      <input aria-label="コマンド検索" placeholder="ｺﾏﾝﾄﾞ検索" />
      <svg width="18" height="18" viewBox="0 0 18 18" fill="none" stroke="#777" strokeWidth="1.600" aria-hidden="true">
        <circle cx="7.500" cy="7" r="6" /><path d="M11.500 11.500L17 17" strokeWidth="2" />
      </svg>
      <Caret $faint />
    </SearchBox>
    <WindowButtons>
      {["user", "help", "minimize", "span", "restore", "close"].map((n) => (
        <WindowButton key={n} $w={n === "close" ? 37 : 41} aria-label={n}><Icon name={n} size={20} /></WindowButton>
      ))}
    </WindowButtons>
  </TitleBar>
);

/* ---------- ribbon ---------- */

const Ribbon = styled.div`
  height: 86px;
  flex: none;
  display: flex;
  padding: 1px 0 2px;
  border-bottom: 1px solid #7f7f7f;
  background: #f7f7f7;
`;
const Group = styled.div<{ $pl?: number; $pr?: number; $last?: boolean }>`
  display: flex;
  padding: 0 ${(p) => p.$pr ?? 0}px 0 ${(p) => p.$pl ?? 0}px;
  border-right: ${(p) => (p.$last ? 0 : 1)}px solid #bdbdbd;
`;
const ToolBox = styled.button<{ $w: number; $state?: "on" | "open" | "off"; $latin?: boolean }>`
  width: ${(p) => p.$w}px;
  height: 82px;
  padding-top: 4px;
  display: flex;
  flex-direction: column;
  align-items: center;
  position: relative;
  font-size: ${(p) => (p.$latin ? 14 : 15)}px;
  color: ${(p) => (p.$state === "off" ? "#aaa" : "#111")};
  border: ${(p) => (p.$state === "on" || p.$state === "open" ? "1px solid #7f7f7f" : "1px solid transparent")};
  background: ${(p) =>
    p.$state === "on" ? "#b0b0b0" : p.$state === "open" ? "linear-gradient(#b0b0b0 62px, #8a8a8a 62px, #8a8a8a 63px, #f7f7f7 63px)" : "none"};
`;
const ToolText = styled.span`
  white-space: pre;
  text-align: center;
`;
const ToolCaret = styled.span`
  position: absolute;
  bottom: 7px;
  left: 50%;
  margin-left: -3px;
  display: flex;
`;
type ToolProps = { icon: string; text: React.ReactNode; w: number; drop?: boolean; state?: "on" | "open" | "off"; latin?: boolean };
const Tool = ({ icon, text, w, drop, state, latin }: ToolProps) => (
  <ToolBox $w={w} $state={state} $latin={latin}>
    <Icon name={icon} />
    <ToolText>{text}</ToolText>
    {drop && <ToolCaret><Caret /></ToolCaret>}
  </ToolBox>
);
const SketchGrid = styled.div`
  display: grid;
  grid-template-columns: 40px 40px 40px 26px;
  grid-template-rows: repeat(3, 26px);
`;
const GridCell = styled.div`
  display: flex;
  align-items: center;
`;
const GridButton = styled.button`
  width: 26px;
  height: 26px;
  display: grid;
  place-items: center;
`;
const List = styled.div`
  width: 168px;
  margin-left: 4px;
  display: grid;
  grid-template-rows: repeat(3, 26px);
`;
const ListItem = styled.button`
  display: flex;
  align-items: center;
  gap: 7px;
  padding-right: 6px;
  text-align: left;
  span:nth-child(2) { flex: 1; }
`;
const Collapse = styled.button`
  margin-left: auto;
  align-self: flex-end;
  padding: 0 8px 2px;
`;

const GRID: [string, boolean][] = [
  ["line", true], ["circle", true], ["spline", true], ["gridPlane", false],
  ["rect", true], ["arc", true], ["ellipse", true], ["letterA", false],
  ["slot", true], ["polygon", false], ["fillet", true], ["point", false],
];

const CommandRibbon = () => (
  <Ribbon>
    <Group $pl={6} $pr={3}>
      <Tool w={46} icon="exitSketch" text={"ｽｹｯﾁ\n終了"} drop state="open" />
      <Tool w={44} icon="smartDim" text={"ｽﾏｰﾄ\n寸法"} drop />
    </Group>
    <Group $pl={1} $pr={1}>
      <SketchGrid>
        {GRID.map(([n, drop]) => (
          <GridCell key={n}>
            <GridButton aria-label={n}><Icon name={n} size={18} /></GridButton>
            {drop && <CaretButton $w={14} aria-label={n}><Caret /></CaretButton>}
          </GridCell>
        ))}
      </SketchGrid>
    </Group>
    <Group $pl={2}>
      <Tool w={70} icon="trim" text={<>ｴﾝﾃｨﾃｨの{"\n"}ﾄﾘﾑ(<u>T</u>)</>} drop />
      <Tool w={59} icon="convert" text={"ｴﾝﾃｨﾃｨ\n変換"} drop />
      <Tool w={58} icon="offset" text={"ｴﾝﾃｨﾃｨ\nｵﾌｾｯﾄ"} />
      <Tool w={55} icon="surfaceOffset" text={"ｻｰﾌｪｽ\n上で\nｵﾌｾｯﾄ"} state="off" />
      <List>
        <ListItem><Icon name="mirror" size={18} /><span>ｴﾝﾃｨﾃｨのﾐﾗｰ</span></ListItem>
        <ListItem><Icon name="pattern" size={18} /><span>直線ﾊﾟﾀｰﾝ ｺﾋﾟｰ</span><Caret /></ListItem>
        <ListItem><Icon name="move" size={18} /><span>ｴﾝﾃｨﾃｨの移動</span><Caret /></ListItem>
      </List>
    </Group>
    <Group $pl={3}>
      <Tool w={76} icon="relations" text={"幾何拘束の\n表示/削除"} drop />
      <Tool w={51} icon="repair" text={"ｽｹｯﾁ\n修復"} />
    </Group>
    <Group><Tool w={82} icon="quickSnap" text="ｸｨｯｸｽﾅｯﾌﾟ" drop /></Group>
    <Group $last>
      <Tool w={84} icon="rapid" text="ﾗﾋﾟｯﾄﾞｽｹｯﾁ" />
      <Tool w={76} icon="instant" text="Instant2D" latin />
      <Tool w={74} icon="shaded" text={"ｼｪｲﾃﾞｨﾝｸﾞ\nｽｹｯﾁ輪\n郭"} state="on" />
    </Group>
    <Collapse aria-label="折りたたむ">
      <svg width="12" height="8" viewBox="0 0 12 8"><path d="M2 6.500l4-4 4 4" fill="none" stroke="#222" strokeWidth="2" /></svg>
    </Collapse>
  </Ribbon>
);

/* ---------- workspace ---------- */

const Workspace = styled.main`
  flex: 1;
  min-height: 0;
  display: flex;
  flex-direction: column;
  background:
    linear-gradient(to bottom, transparent 54%, rgba(255, 255, 255, 0.7) 66%, #fff 76%, #fff 85%, #f7f8fb 100%),
    radial-gradient(ellipse 48% 54% at 25% 0, #fff 58%, rgba(255, 255, 255, 0) 100%),
    radial-gradient(ellipse 24% 34% at 100% 0, #efeff3 20%, rgba(239, 239, 243, 0) 100%),
    linear-gradient(to right, #dfe3ed, #e2e5ee 60%, #d7dae6 84%, #dee1ea);
`;
const TopRow = styled.div`
  display: flex;
  height: 28px;
  flex: none;
`;
const Tab = styled.button<{ $w: number; $on?: boolean }>`
  width: ${(p) => p.$w}px;
  height: 28px;
  font-size: ${(p) => (p.$w > 100 ? 14 : 15)}px;
  color: #222;
  background: ${(p) => (p.$on ? "#f7f7f7" : "#d3d3d3")};
  border-right: 1px solid #7f7f7f;
  border-bottom: 1px solid ${(p) => (p.$on ? "#f7f7f7" : "#7f7f7f")};
`;
const Hud = styled.div`
  flex: 1;
  display: flex;
  align-items: center;
  padding: 2px 0 0 357px;
`;
const HudButton = styled.button`
  width: 26px;
  display: grid;
  place-items: center;
`;
const HudCaret = styled.button`
  width: 14px;
  display: grid;
  place-items: center;
`;
const DocButtons = styled(WindowButtons)`
  padding: 2px 7px 0 0;
`;
const Body = styled.div`
  flex: 1;
  min-height: 0;
  display: flex;
`;
const Panel = styled.aside`
  width: 273px;
  flex: none;
  display: flex;
  flex-direction: column;
  padding-right: 2px;
  border-right: 1px solid #7f7f7f;
  background: #f7f7f7;
`;
const Grip = styled.div`
  height: 24px;
  border-top: 1px solid #93b0b8;
  border-bottom: 1px solid #c4c4c4;
  display: grid;
  place-items: center;
`;
const Dot = styled.span`
  width: 6px;
  height: 6px;
  border-radius: 50%;
  border: 1px solid #999;
  background: #ccc;
`;
const PanelTabs = styled.div`
  display: flex;
  height: 31px;
  padding: 5px 0 0 2px;
  border-bottom: 1px solid #aaa;
`;
const PanelTab = styled.button<{ $on?: boolean }>`
  width: 40px;
  height: 26px;
  display: grid;
  place-items: center;
  border: 1px solid #8a8a8a;
  border-left: 0;
  border-bottom-color: ${(p) => (p.$on ? "#f7f7f7" : "#8a8a8a")};
  background: ${(p) => (p.$on ? "#f7f7f7" : "#d3d3d3")};
`;
const MoreTabs = styled.button`
  margin-left: auto;
  padding: 0 6px;
`;
const Filter = styled.label`
  height: 32px;
  margin: 0 3px 0 5px;
  padding-left: 2px;
  display: flex;
  align-items: center;
  gap: 6px;
  border: 1px solid #bdbdbd;
  input { flex: 1; outline: 0; }
`;
const Tree = styled.ul`
  overflow: hidden;
  border-left: 1px solid #bdbdbd;
  border-bottom: 3px solid #bdbdd6;
`;
const TreeRow = styled.li<{ $indent: number; $faint?: boolean }>`
  height: 24px;
  padding-left: ${(p) => p.$indent}px;
  display: flex;
  align-items: center;
  gap: 5px;
  white-space: nowrap;
  color: ${(p) => (p.$faint ? "#999" : "#111")};
`;
const Twist = styled.span<{ $open?: boolean; $hidden?: boolean }>`
  width: 0;
  height: 0;
  margin-right: ${(p) => (p.$open ? 5 : 8)}px;
  border: 4px solid transparent;
  border-left-color: ${(p) => (p.$open || p.$hidden ? "transparent" : "#555")};
  border-top-color: ${(p) => (p.$open ? "#555" : "transparent")};
  border-right-width: ${(p) => (p.$open ? 4 : 0)}px;
  border-bottom-width: ${(p) => (p.$open ? 0 : 4)}px;
`;
const ScrollTrack = styled.div`
  margin-top: auto;
  height: 21px;
  margin-bottom: 5px;
  padding: 9px 39px 0 22px;
  background: #efefef;
  border-bottom: 1px solid #ddd;
  &::before { content: ""; display: block; height: 3px; border-radius: 2px; background: #858585; }
`;

const TREE: { icon: string; text: string; twist?: "open" | "closed"; faint?: boolean }[] = [
  { icon: "folderHistory", text: "履歴", twist: "closed" },
  { icon: "folderSensor", text: "ｾﾝｻｰ" },
  { icon: "folderA", text: "ｱﾉﾃｰﾄ ｱｲﾃﾑ", twist: "closed" },
  { icon: "folderBody", text: "ｿﾘｯﾄﾞ ﾎﾞﾃﾞｨ(1)", twist: "closed" },
  { icon: "material", text: "材料 <指定なし>" },
  { icon: "plane", text: "正面" },
  { icon: "plane", text: "平面" },
  { icon: "plane", text: "右側面" },
  { icon: "origin", text: "原点" },
  { icon: "extrude", text: "板", twist: "closed" },
  { icon: "extrudeBusy", text: "円", twist: "open", faint: true },
];

const FeaturePanel = () => (
  <Panel>
    <Grip><Dot /></Grip>
    <PanelTabs>
      {["part", "properties", "config", "target", "appearance"].map((n, i) => (
        <PanelTab key={n} $on={i === 0} aria-label={n}><Icon name={n} size={18} /></PanelTab>
      ))}
      <MoreTabs aria-label="次へ">
        <svg width="8" height="12" viewBox="0 0 8 12"><path d="M1.500 1.500L6 6l-4.500 4.500" fill="none" stroke="#333" strokeWidth="2" /></svg>
      </MoreTabs>
    </PanelTabs>
    <Filter>
      <Icon name="funnel" size={18} />
      <input aria-label="フィルター" />
    </Filter>
    <Tree>
      <TreeRow $indent={3}><Icon name="partState" size={18} />Plate (ﾃﾞﾌｫﾙﾄ) &lt;&lt;ﾃﾞﾌｫﾙﾄ&gt;_表示状態</TreeRow>
      {TREE.map((r) => (
        <TreeRow key={r.text} $indent={r.twist === "open" ? 7 : 9} $faint={r.faint}>
          <Twist $open={r.twist === "open"} $hidden={!r.twist} />
          <Icon name={r.icon} size={18} />
          {r.text}
        </TreeRow>
      ))}
      <TreeRow $indent={49}><Icon name="sketch" size={18} />ｽｹｯﾁ2</TreeRow>
    </Tree>
    <ScrollTrack />
  </Panel>
);

/* ---------- sketch viewport ---------- */

const Viewport = styled.section`
  flex: 1;
  min-width: 0;
  position: relative;
`;
const Drawing = styled.svg`
  display: block;
  width: 100%;
  height: 100%;
  .dim { font-family: Lato, sans-serif; font-size: 21px; fill: #000; }
  .mark { font-family: "Liberation Sans", sans-serif; font-size: 13px; font-weight: 700; fill: #000; }
  .axis { font-family: "Liberation Sans", sans-serif; font-size: 11px; }
`;
const Splitter = styled.button`
  position: absolute;
  left: 0;
  top: 433px;
  width: 11px;
  height: 49px;
  display: grid;
  place-items: center;
  border: 1px solid #8a8a8a;
  border-left: 0;
  background: #f7f7f7;
`;
const TaskPane = styled.div`
  position: absolute;
  right: 0;
  top: 29px;
  border-top: 1px solid #8a8a8a;
`;
const PaneButton = styled.button<{ $on?: boolean }>`
  width: 33px;
  height: 30px;
  display: grid;
  place-items: center;
  border: 1px solid #8a8a8a;
  border-top: 0;
  border-right: 0;
  background: ${(p) => (p.$on ? "#f7f7f7" : "#d3d3d3")};
`;
const Corner = styled.div`
  position: absolute;
  right: 40px;
  top: 6px;
  opacity: 0.3;
`;

/* model millimetres to sheet units */
const S = 2.288;
const X = (mm: number) => 848.3 + mm * S;
const Y = (mm: number) => 1018.5 - mm * S;

const Arrow = ({ x, y, a }: { x: number; y: number; a: number }) => (
  <path d="M-15 -7L0 0L-15 7" transform={`translate(${x} ${y}) rotate(${a})`} />
);

const HDim = ({ a, b, y, text, outside, tx }: { a: number; b: number; y: number; text: string; outside?: boolean; tx: number }) => (
  <g>
    <path d={`M${outside ? a - 29 : a} ${y}H${outside ? b + 29 : b}`} />
    <Arrow x={a} y={y} a={outside ? 0 : 180} />
    <Arrow x={b} y={y} a={outside ? 180 : 0} />
    <text className="dim" x={tx} y={y - 4} textAnchor="middle" stroke="none">{text}</text>
  </g>
);

const VDim = ({ a, b, x, text, outside, ty }: { a: number; b: number; x: number; text: string; outside?: boolean; ty: number }) => (
  <g>
    <path d={`M${x} ${outside ? a - 29 : a}V${outside ? b + 29 : b}`} />
    <Arrow x={x} y={a} a={outside ? 90 : 270} />
    <Arrow x={x} y={b} a={outside ? 270 : 90} />
    <text className="dim" transform={`translate(${x - 5} ${ty}) rotate(-90)`} textAnchor="middle" stroke="none">{text}</text>
  </g>
);

const Hole = ({ x, y, d }: { x: number; y: number; d: number }) => {
  const r = (d / 2) * S;
  return (
    <g transform={`translate(${X(x)} ${Y(y)})`}>
      <circle r={r} fill="#0086ae" strokeWidth="2.600" />
      <path d="M-5 0H5M0 -5V5" />
      <g transform="rotate(-45)">
        <path d={`M${-r} 0H${r + 84}`} />
        <path d={`M${r + 15} -6L${r} 0L${r + 15} 6`} />
        <circle cx={r + 11} cy="-13" r="7.500" strokeWidth="1.500" />
        <path d={`M${r + 7} -1L${r + 15} -25`} strokeWidth="1.500" />
        <text className="dim" x={r + 22} y="-5" stroke="none">{d}.00</text>
      </g>
    </g>
  );
};

const Mark = ({ x, y, n, vertical }: { x: number; y: number; n: string; vertical?: boolean }) => (
  <g transform={`translate(${x} ${y})`} stroke="none">
    <path d="M0 0h12v12H0z" fill="#00cc33" />
    <path d={vertical ? "M6 1v10" : "M1 6h10"} stroke="#111" />
    <text className="mark" x="12" y="12">{n}</text>
  </g>
);

const PlateDrawing = () => (
  <Drawing viewBox="273 154 1647 944" preserveAspectRatio="xMidYMid meet" fill="none" stroke="#000" strokeWidth="1.300" aria-label="Plate">
    <path d={`M${X(0)} ${Y(300)}H${X(300)}V${Y(0)}H${X(0)}z`} fill="#00bec0" />
    <Hole x={30} y={160} d={30} />
    <Hole x={30} y={30} d={20} />
    <Hole x={160} y={120} d={40} />
    <Hole x={250} y={250} d={35} />
    <Hole x={200} y={30} d={25} />
    <path d={`M${X(0)} 213V${Y(300)}M${X(160)} 250V${Y(120)}M${X(200)} 250V${Y(30)}M${X(250)} 213V${Y(250)}`} />
    <path d={`M${X(30)} 276V${Y(160)}`} strokeWidth="1.800" />
    <path d={`M690 ${Y(250)}H${X(250)}M690 ${Y(0)}H844M734 ${Y(160)}H${X(30)}`} />
    <path d={`M734 ${Y(120)}H${X(160)}M773 ${Y(30)}H${X(30)}`} strokeWidth="1.600" />
    <HDim a={X(0)} b={X(250)} y={218} text="250.00" tx={1138} />
    <HDim a={X(160)} b={X(200)} y={254} text="40.00" tx={1258} outside />
    <HDim a={X(30)} b={X(160)} y={281} text="130.00" tx={1070} />
    <HDim a={X(0)} b={X(30)} y={313} text="30.00" tx={882} outside />
    <VDim a={Y(250)} b={Y(0)} x={694.5} text="250.00" ty={740} />
    <VDim a={Y(160)} b={Y(120)} x={738.5} text="40.00" ty={691} outside />
    <VDim a={Y(120)} b={Y(30)} x={778} text="90.00" ty={861} />
    <VDim a={Y(30)} b={Y(0)} x={811} text="30.00" ty={984} outside />
    <Mark x={897} y={632} n="4" vertical />
    <Mark x={897} y={930} n="4" vertical />
    <Mark x={925} y={944} n="5" />
    <Mark x={1286} y={944} n="5" />
    <path d="M848.300 1014v4.500h10" stroke="#f00" strokeWidth="1.500" />
    <path d="M848.300 978l4 11h-8zM870 1018.500l-12-4v8z" fill="#f00" stroke="none" />
    <path d={`M${X(0)} 978v35`} />
    <g stroke="none">
      <circle cx="323" cy="1030" r="4" fill="#0a6b12" />
      <path d="M325 1028h24v4h-24z" fill="#d80000" />
      <path d="M360 1030.500l-11-4v8z" fill="#c00000" />
      <path d="M321 1030h4v27h-4z" fill="#0000b0" />
      <path d="M323 1067l-4-10h8z" fill="#0000b0" />
      <text className="axis" x="365" y="1030" fill="#f33">X</text>
      <text className="axis" x="320" y="1030" fill="#1a7a1a">Y</text>
      <text className="axis" x="320" y="1074" fill="#22f">Z</text>
    </g>
  </Drawing>
);

const HUD: [string, boolean][] = [
  ["zoomFit", false], ["zoomArea", false], ["prevView", false], ["section", false], ["viewOrient", true],
  ["cube", false], ["normalTo", false], ["display", true], ["eye", true], ["editApp", false], ["scene", true], ["monitor", true],
];
const PANES = ["home", "library", "folderOpen", "palette", "ball", "properties", "forum"];

/* ---------- bottom bars ---------- */

const BottomTabs = styled.div`
  height: 21px;
  flex: none;
  display: flex;
  border-top: 1px solid #7f7f7f;
  border-bottom: 1px solid #7f7f7f;
`;
const NavButtons = styled.div`
  display: flex;
  width: 83px;
  padding-left: 2px;
  border-top: 1px solid #222;
  background: #8d90a8;
`;
const NavButton = styled.button`
  width: 20px;
  height: 18px;
  display: grid;
  place-items: center;
  border: 1px solid #8b8ea6;
  background: #a9acc4;
`;
const BottomTab = styled.button<{ $w: number; $on?: boolean }>`
  width: ${(p) => p.$w}px;
  padding: 0 8px 2px;
  text-align: ${(p) => (p.$on ? "center" : "left")};
  background: ${(p) => (p.$on ? "#f7f7f7" : "#d3d3d3")};
  border-right: 1px solid #7f7f7f;
  font-size: 16px;
  line-height: 16px;
`;
const StatusBar = styled.footer`
  height: 21px;
  flex: none;
  display: flex;
  align-items: center;
  padding: 3px 4px 0 1px;
  font-size: 14px;
  white-space: nowrap;
`;
const Field = styled.span<{ $w: number; $right?: boolean }>`
  width: ${(p) => p.$w}px;
  text-align: ${(p) => (p.$right ? "right" : "left")};
  overflow: hidden;
`;
const Push = styled.span`
  flex: 1;
`;

const NAV = ["M5 3v10M13 3L7 8l6 5z", "M12 3L5 8l7 5z", "M5 3l7 5-7 5z", "M12 3v10M4 3l6 5-6 5z"];

export default function App() {
  return (
    <Page>
      <GlobalStyle />
      <Title />
      <CommandRibbon />
      <Workspace>
        <TopRow>
          <Tab $w={70}>ﾌｨｰﾁｬｰ</Tab>
          <Tab $w={56} $on>ｽｹｯﾁ</Tab>
          <Tab $w={76}>ﾏｰｸｱｯﾌﾟ</Tab>
          <Tab $w={56}>評価</Tab>
          <Tab $w={128}>MBD Dimension</Tab>
          <Tab $w={160}>SOLIDWORKS ｱﾄﾞｲﾝ</Tab>
          <Hud>
            {HUD.map(([n, drop]) => (
              <React.Fragment key={n}>
                <HudButton aria-label={n}><Icon name={n} size={18} /></HudButton>
                {drop && <HudCaret aria-label={n}><Caret $faint /></HudCaret>}
              </React.Fragment>
            ))}
          </Hud>
          <DocButtons $faint>
            {["paneLeft", "paneRight", "minimize", "restore", "close"].map((n) => (
              <WindowButton key={n} $w={26} aria-label={n}><Icon name={n} size={18} /></WindowButton>
            ))}
          </DocButtons>
        </TopRow>
        <Body>
          <FeaturePanel />
          <Viewport>
            <PlateDrawing />
            <Splitter aria-label="パネル"><Dot /></Splitter>
            <Corner>
              <svg width="70" height="56" viewBox="0 0 70 56" aria-hidden="true">
                <path d="M22 1.500H2v15c0 7 4 9.500 9 9.500h11" fill="none" stroke={BLUE} strokeWidth="2" />
                <path d="M45 16c-1 10-7 13-13 12v7L22 26l10-10v7c6 0 10-2 13-7z" fill="#7db7d0" stroke="#356a84" />
                <path d="M51 32l7 7 7-7 5 5-7 7 7 7-5 5-7-7-7 7-5-5 7-7-7-7z" fill="#e0343a" stroke="#b01e24" />
              </svg>
            </Corner>
            <TaskPane>
              {PANES.map((n) => (
                <PaneButton key={n} $on={n === "ball"} aria-label={n}><Icon name={n} size={18} /></PaneButton>
              ))}
            </TaskPane>
          </Viewport>
        </Body>
      </Workspace>
      <BottomTabs>
        <NavButtons>
          {NAV.map((d) => (
            <NavButton key={d} aria-label="ページ移動">
              <svg width="16" height="16" viewBox="0 0 16 16"><path d={d} fill="#7b7e98" stroke="#7b7e98" strokeWidth="1.500" /></svg>
            </NavButton>
          ))}
        </NavButtons>
        <BottomTab $w={62} $on>ﾓﾃﾞﾙ</BottomTab>
        <BottomTab $w={130}>ﾓｰｼｮﾝ ｽﾀﾃﾞｨ 1</BottomTab>
      </BottomTabs>
      <StatusBar>
        <span>SOLIDWORKS Premium 2025 SP2.0</span>
        <Push />
        <Field $w={80} $right>393.63mm</Field>
        <Field $w={84} $right>6.8mm</Field>
        <Field $w={56} $right>0mm</Field>
        <Field $w={78}>&nbsp;完全定義</Field>
        <Field $w={126}>編集中： ｽｹｯﾁ2</Field>
        <Field $w={140}><Icon name="traffic" size={14} /></Field>
        <Field $w={78}>MMGS</Field>
        <Field $w={36}>
          <svg width="8" height="6" viewBox="0 0 8 6"><path d="M4 1l3 4H1z" fill="#333" /></svg>
        </Field>
        <Icon name="tag" size={16} />
      </StatusBar>
    </Page>
  );
}
